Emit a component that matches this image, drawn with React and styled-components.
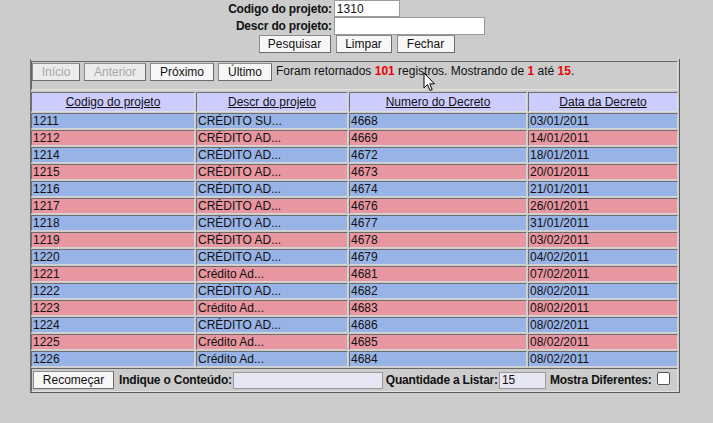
import React from "react";
import styled, { createGlobalStyle } from "styled-components";

const GlobalStyle = createGlobalStyle`
  body {
    margin: 0;
    background: #cccccc;
    font-family: "Liberation Sans", Arial, sans-serif;
    font-size: 12px;
    color: #111;
  }
`;

const rows = [
  ["1211", "CRÉDITO SU...", "4668", "03/01/2011"],
  ["1212", "CRÉDITO AD...", "4669", "14/01/2011"],
  ["1214", "CRÉDITO AD...", "4672", "18/01/2011"],
  ["1215", "CRÉDITO AD...", "4673", "20/01/2011"],
  ["1216", "CRÉDITO AD...", "4674", "21/01/2011"],
  ["1217", "CRÉDITO AD...", "4676", "26/01/2011"],
  ["1218", "CRÉDITO AD...", "4677", "31/01/2011"],
  ["1219", "CRÉDITO AD...", "4678", "03/02/2011"],
  ["1220", "CRÉDITO AD...", "4679", "04/02/2011"],
  ["1221", "Crédito Ad...", "4681", "07/02/2011"],
  ["1222", "CRÉDITO AD...", "4682", "08/02/2011"],
  ["1223", "Crédito Ad...", "4683", "08/02/2011"],
  ["1224", "CRÉDITO AD...", "4686", "08/02/2011"],
  ["1225", "Crédito Ad...", "4685", "08/02/2011"],
  ["1226", "Crédito Ad...", "4684", "08/02/2011"],
];

const Page = styled.div`
  position: relative;
  width: 713px;
  height: 423px;
`;

const SearchForm = styled.div`
  display: grid;
  grid-template-columns: auto 151px;
  justify-content: center;
  column-gap: 2px;
`;

const Label = styled.label`
  font-weight: bold;
  letter-spacing: -0.2px;
  text-align: right;
  align-self: center;
  white-space: nowrap;
`;

const FieldSlot = styled.div`
  display: flex;
  align-items: flex-start;
`;

const Field = styled.input`
  box-sizing: border-box;
  flex-shrink: 0;
  width: ${(p) => p.$w}px;
  height: ${(p) => p.$h || 17}px;
  margin: 0;
  padding: 0 2px;
  border: 1px solid #9a9a9a;
  background: ${(p) => (p.$tint ? "#e6e6f4" : "#ffffff")};
  font-family: "Liberation Sans", Arial, sans-serif;
  font-size: 12px;
  color: #111;
  outline: none;
`;

const ButtonRow = styled.div`
  display: flex;
  justify-content: center;
  gap: 5px;
`;

const Button = styled.button`
  box-sizing: border-box;
  flex-shrink: 0;
  width: ${(p) => p.$w}px;
  height: 18px;
  margin: 0;
  padding: 0;
  border: 1px solid #8c8c8c;
  border-right-color: #6a6a6a;
  border-bottom-color: #6a6a6a;
  background: ${(p) => (p.disabled ? "#ececec" : "#f7f7f7")};
  color: ${(p) => (p.disabled ? "#a8a8a8" : "#111")};
  font-family: "Liberation Sans", Arial, sans-serif;
  font-size: 12px;
  line-height: 16px;
  border-radius: 0;
`;

const Panel = styled.div`
  box-sizing: border-box;
  width: 650px;
  margin: 6px 0 0 30px;
  padding: 2px 1px 0 0;
  border-left: 1px solid #6e6e6e;
  border-right: 1px solid #5a5a5a;
  border-bottom: 1px solid #5a5a5a;
`;

const InsetBar = styled.div`
  box-sizing: border-box;
  height: ${(p) => p.$h}px;
  border-top: 1px solid #666;
  border-left: 1px solid #666;
  border-right: 1px solid #e2e2e2;
  border-bottom: 1px solid #e2e2e2;
  padding: ${(p) => p.$pad};
  display: flex;
  align-items: ${(p) => p.$align || "center"};
  gap: ${(p) => p.$gap || 0}px;
  white-space: nowrap;
`;

const Summary = styled.span`
  line-height: 17px;
`;

const Hit = styled.b`
  color: #ee0000;
`;

const Grid = styled.table`
  width: 649px;
  margin: 1px 0 0 -1px;
  border-collapse: separate;
  border-spacing: 1px;
  table-layout: fixed;
`;

const HeadCell = styled.th`
  height: 18px;
  padding: 0;
  background: #ccccff;
  font-weight: normal;
  text-align: center;
  text-decoration: underline;
  border-style: solid;
  border-width: 1px;
  border-color: #6e6e6e #dedede #dedede #6e6e6e;
`;

const Cell = styled.td`
  height: 14px;
  padding: 0 0 0 1px;
  line-height: 14px;
  white-space: nowrap;
  overflow: hidden;
  background: ${(p) => (p.$odd ? "#e8969f" : "#98b4e6")};
  border-style: solid;
  border-width: 1px;
  border-color: #6e6e6e #d4d4d4 #d4d4d4 #6e6e6e;
`;

const BarLabel = styled.b`
  flex-shrink: 0;
  letter-spacing: -0.2px;
  margin: 0 ${(p) => p.$mr || 0}px 0 ${(p) => p.$ml || 0}px;
`;

const Check = styled.span`
  box-sizing: border-box;
  flex-shrink: 0;
  width: 13px;
  height: 13px;
  margin: -3px 0 0 0;
  border: 1px solid #555;
  border-radius: 2px;
  background: #fff;
`;

const Pointer = styled.svg`
  position: absolute;
  left: 423px;
  top: 72px;
`;

export default function App() {
  return (
    <Page>
      <GlobalStyle />
      <SearchForm>
        <Label>Codigo do projeto:</Label>
        <FieldSlot>
          <Field $w={66} defaultValue="1310" />
        </FieldSlot>
        <Label>Descr do projeto:</Label>
        <FieldSlot>
          <Field $w={151} $h={18} />
        </FieldSlot>
      </SearchForm>
      <ButtonRow>
        <Button $w={72}>Pesquisar</Button>
        <Button $w={56}>Limpar</Button>
        <Button $w={58}>Fechar</Button>
      </ButtonRow>

      <Panel>
        <InsetBar $h={29} $pad="1px 0 0 0" $align="flex-start" $gap={4}>
          <Button disabled $w={48}>Início</Button>
          <Button disabled $w={62}>Anterior</Button>
          <Button $w={64}>Próximo</Button>
          <Button $w={54}>Último</Button>
          <Summary>
            Foram retornados <Hit>101</Hit> registros. Mostrando de <Hit>1</Hit> até <Hit>15</Hit>.
          </Summary>
        </InsetBar>

        <Grid>
          <colgroup>
            <col style={{ width: 164 }} />
            <col style={{ width: 152 }} />
            <col style={{ width: 178 }} />
            <col style={{ width: 150 }} />
          </colgroup>
          <thead>
            <tr>
              <HeadCell>Codigo do projeto</HeadCell>
              <HeadCell>Descr do projeto</HeadCell>
              <HeadCell>Numero do Decreto</HeadCell>
              <HeadCell>Data da Decreto</HeadCell>
            </tr>
          </thead>
          <tbody>
            {rows.map((r, i) => (
              <tr key={r[0]}>
                {r.map((v, j) => (
                  <Cell key={j} $odd={i % 2 === 1}>
                    {v}
                  </Cell>
                ))}
              </tr>
            ))}
          </tbody>
        </Grid>

        <InsetBar $h={24} $pad="0 0 0 1px">
          <Button $w={81}>Recomeçar</Button>
          <BarLabel $ml={5} $mr={1}>Indique o Conteúdo:</BarLabel>
          <Field $w={150} $tint />
          <BarLabel $ml={3} $mr={1}>Quantidade a Listar:</BarLabel>
          <Field $w={47} $tint defaultValue="15" />
          <BarLabel $ml={4} $mr={5}>Mostra Diferentes:</BarLabel>
          <Check />
        </InsetBar>
      </Panel>

      <Pointer width="13" height="21" viewBox="0 0 13 21">
        <path d="M1 1 L1 16 L4.5 12.5 L7 18.5 L9.2 17.6 L6.8 11.8 L11.5 11.8 Z" fill="#fff" stroke="#000" strokeWidth="1" strokeLinejoin="round" />
      </Pointer>
    </Page>
  );
}
